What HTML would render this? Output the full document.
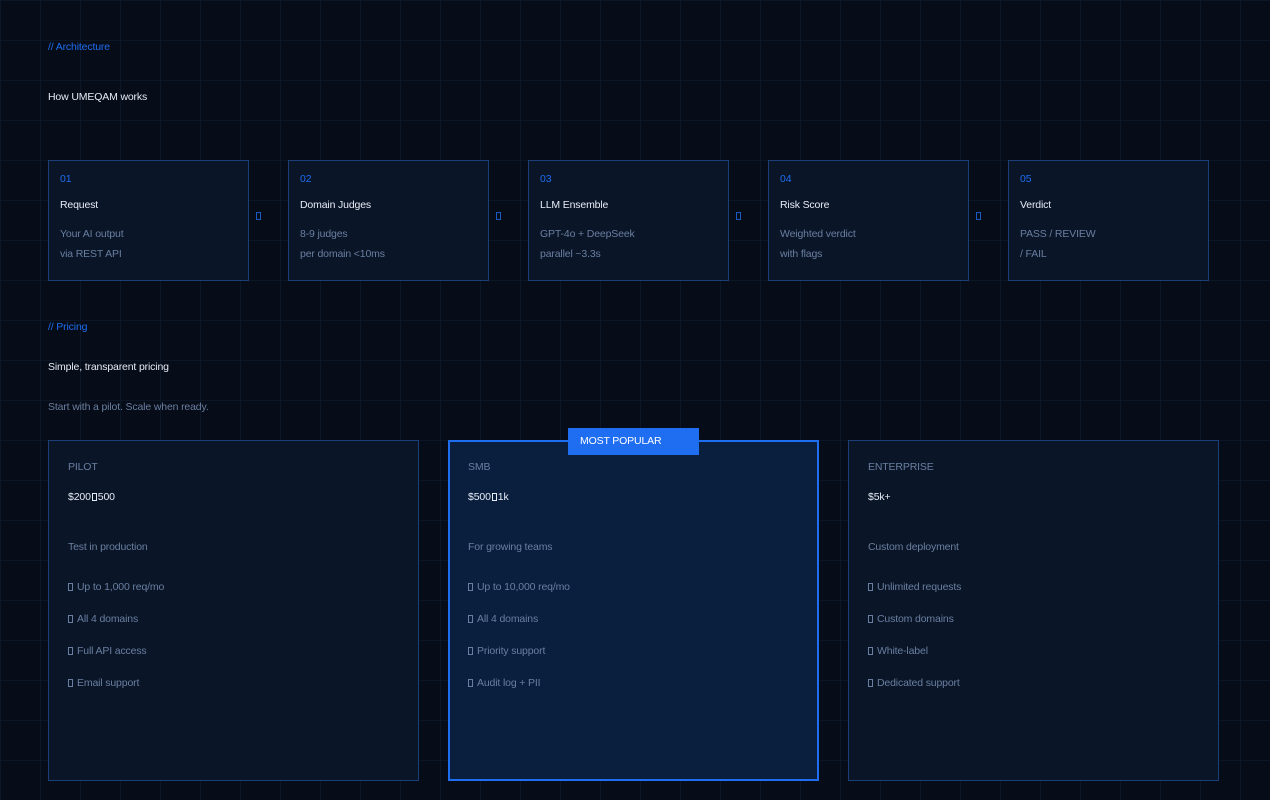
<!DOCTYPE html><html><head><style>
*{margin:0;padding:0;box-sizing:border-box}
body{width:1270px;height:800px;overflow:hidden;background:#060c18;font-family:"Liberation Sans",sans-serif;font-size:10.5px;letter-spacing:-0.15px;position:relative;
background-image:linear-gradient(#0b1626 1px,transparent 1px),linear-gradient(90deg,#0b1626 1px,transparent 1px);background-size:40px 40px;background-position:0 0}
.a{position:absolute;white-space:nowrap}
.lab{color:#1f6df0}
.w{color:#e6ecf5}
.g{color:#6a7fa0}
.step{position:absolute;top:160px;width:201px;height:121px;background:#0a1528;border:1px solid #1b3f78}
.step .n{position:absolute;left:11px;top:12px;color:#1f6df0}
.step .t{position:absolute;left:11px;top:38px;color:#e6ecf5}
.step .d{position:absolute;left:11px;top:63px;color:#6a7fa0;line-height:20px}
.arr{position:absolute;top:212px;width:5px;height:8px;border:1px solid #1f6df0;opacity:.8}
.card{position:absolute;top:440px;width:371px;height:341px;background:#0a1528;border:1px solid #1b3f78}
.card.p{background:#0a1f3e;border:2px solid #1f6df0}
.card .x{position:absolute;left:19px}
.card.p .x{left:18px}
.box{display:inline-block;width:5px;height:8px;border:1px solid #6a7fa0;margin-right:4px;vertical-align:-1px}
.bw{border-color:#e6ecf5;margin:0 1px}
</style></head><body>
<div class="a lab" style="left:48px;top:41px">// Architecture</div>
<div class="a w" style="left:48px;top:91px">How UMEQAM works</div>

<div class="step" style="left:48px"><div class="n">01</div><div class="t">Request</div><div class="d">Your AI output<br>via REST API</div></div>
<div class="arr" style="left:256px"></div>
<div class="step" style="left:288px"><div class="n">02</div><div class="t">Domain Judges</div><div class="d">8-9 judges<br>per domain &lt;10ms</div></div>
<div class="arr" style="left:496px"></div>
<div class="step" style="left:528px"><div class="n">03</div><div class="t">LLM Ensemble</div><div class="d">GPT-4o + DeepSeek<br>parallel ~3.3s</div></div>
<div class="arr" style="left:736px"></div>
<div class="step" style="left:768px"><div class="n">04</div><div class="t">Risk Score</div><div class="d">Weighted verdict<br>with flags</div></div>
<div class="arr" style="left:976px"></div>
<div class="step" style="left:1008px"><div class="n">05</div><div class="t">Verdict</div><div class="d">PASS / REVIEW<br>/ FAIL</div></div>

<div class="a lab" style="left:48px;top:321px">// Pricing</div>
<div class="a w" style="left:48px;top:361px">Simple, transparent pricing</div>
<div class="a g" style="left:48px;top:401px">Start with a pilot. Scale when ready.</div>

<div class="card" style="left:48px">
<div class="x g" style="top:20px">PILOT</div>
<div class="x w" style="top:50px">$200<span class="box bw"></span>500</div>
<div class="x g" style="top:100px">Test in production</div>
<div class="x g" style="top:140px"><span class="box"></span>Up to 1,000 req/mo</div>
<div class="x g" style="top:172px"><span class="box"></span>All 4 domains</div>
<div class="x g" style="top:204px"><span class="box"></span>Full API access</div>
<div class="x g" style="top:236px"><span class="box"></span>Email support</div>
</div>
<div class="card p" style="left:448px">
<div class="x g" style="top:19px">SMB</div>
<div class="x w" style="top:49px">$500<span class="box bw"></span>1k</div>
<div class="x g" style="top:99px">For growing teams</div>
<div class="x g" style="top:139px"><span class="box"></span>Up to 10,000 req/mo</div>
<div class="x g" style="top:171px"><span class="box"></span>All 4 domains</div>
<div class="x g" style="top:203px"><span class="box"></span>Priority support</div>
<div class="x g" style="top:235px"><span class="box"></span>Audit log + PII</div>
</div>
<div class="a" style="left:568px;top:428px;width:131px;height:27px;background:#1f6df0;color:#fff;padding:7px 12px;font-size:10.5px">MOST POPULAR</div>
<div class="card" style="left:848px">
<div class="x g" style="top:20px">ENTERPRISE</div>
<div class="x w" style="top:50px">$5k+</div>
<div class="x g" style="top:100px">Custom deployment</div>
<div class="x g" style="top:140px"><span class="box"></span>Unlimited requests</div>
<div class="x g" style="top:172px"><span class="box"></span>Custom domains</div>
<div class="x g" style="top:204px"><span class="box"></span>White-label</div>
<div class="x g" style="top:236px"><span class="box"></span>Dedicated support</div>
</div>
</body></html>
